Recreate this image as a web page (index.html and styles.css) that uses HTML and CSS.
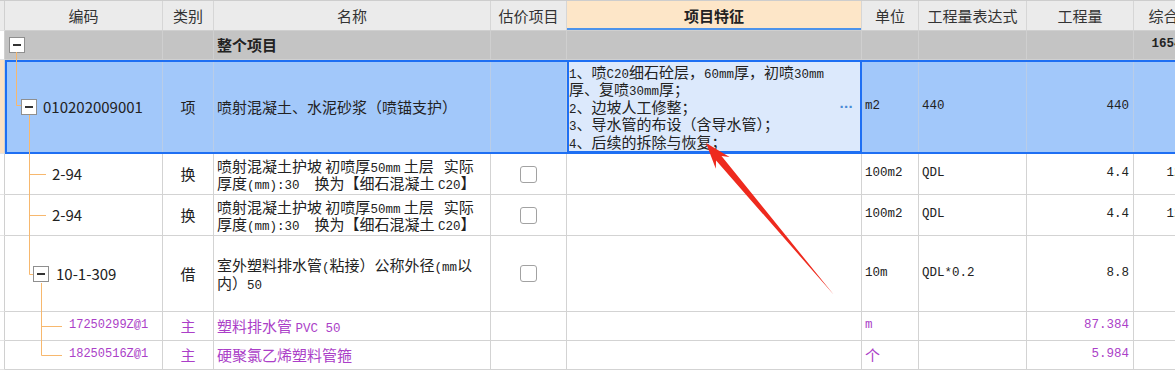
FILE: index.html
```html
<!DOCTYPE html>
<html lang="zh-CN">
<head>
<meta charset="utf-8">
<title>清单</title>
<link rel="stylesheet" href="styles.css">
</head>
<body>
<div class="grid">
  <div class="row head">
    <div class="strip"></div>
    <div class="cells">
      <div class="c ctr">编码</div>
      <div class="c ctr">类别</div>
      <div class="c ctr">名称</div>
      <div class="c ctr">估价项目</div>
      <div class="c ctr feat-h">项目特征</div>
      <div class="c ctr">单位</div>
      <div class="c ctr">工程量表达式</div>
      <div class="c ctr">工程量</div>
      <div class="c ctr">综合单价</div>
    </div>
  </div>

  <div class="row group">
    <div class="strip"></div>
    <div class="cells">
      <div class="c code lv0"><span class="exp"></span></div>
      <div class="c"></div>
      <div class="c name b">整个项目</div>
      <div class="c"></div>
      <div class="c"></div>
      <div class="c"></div>
      <div class="c"></div>
      <div class="c"></div>
      <div class="c rt mono b">165432.18</div>
    </div>
  </div>

  <div class="row sel">
    <div class="strip"></div>
    <div class="cells">
      <div class="c code lv1"><span class="exp"></span><span class="ctext">010202009001</span></div>
      <div class="c ctr">项</div>
      <div class="c name">喷射混凝土、水泥砂浆（喷锚支护）</div>
      <div class="c"></div>
      <div class="c feat">
        <div class="feat-text"><span class="lt">1</span>、喷<span class="lt">C20</span>细石砼层，<span class="lt">60mm</span>厚，初喷<span class="lt">30mm</span><br>厚、复喷<span class="lt">30mm</span>厚；<br><span class="lt">2</span>、边坡人工修整；<br><span class="lt">3</span>、导水管的布设（含导水管）；<br><span class="lt">4</span>、后续的拆除与恢复；</div>
        <span class="dots">···</span>
      </div>
      <div class="c mono pl">m2</div>
      <div class="c mono pl">440</div>
      <div class="c rt mono">440</div>
      <div class="c"></div>
    </div>
  </div>

  <div class="row r2">
    <div class="strip"></div>
    <div class="cells">
      <div class="c code lv2">2-94</div>
      <div class="c ctr">换</div>
      <div class="c name"><div>喷射混凝土护坡 初喷厚<span class="lt">50mm</span> 土层&nbsp;&nbsp;&nbsp;实际<br>厚度<span class="lt">(mm):30&nbsp;&nbsp;</span>换为【细石混凝土 <span class="lt">C20</span>】</div></div>
      <div class="c ctr"><span class="chk"></span></div>
      <div class="c"></div>
      <div class="c mono pl">100m2</div>
      <div class="c mono pl">QDL</div>
      <div class="c rt mono">4.4</div>
      <div class="c rt mono">1297.36</div>
    </div>
  </div>

  <div class="row r2">
    <div class="strip"></div>
    <div class="cells">
      <div class="c code lv2">2-94</div>
      <div class="c ctr">换</div>
      <div class="c name"><div>喷射混凝土护坡 初喷厚<span class="lt">50mm</span> 土层&nbsp;&nbsp;&nbsp;实际<br>厚度<span class="lt">(mm):30&nbsp;&nbsp;</span>换为【细石混凝土 <span class="lt">C20</span>】</div></div>
      <div class="c ctr"><span class="chk"></span></div>
      <div class="c"></div>
      <div class="c mono pl">100m2</div>
      <div class="c mono pl">QDL</div>
      <div class="c rt mono">4.4</div>
      <div class="c rt mono">1297.36</div>
    </div>
  </div>

  <div class="row r3">
    <div class="strip"></div>
    <div class="cells">
      <div class="c code lv3"><span class="exp"></span><span class="ctext2">10-1-309</span></div>
      <div class="c ctr">借</div>
      <div class="c name"><div>室外塑料排水管<span class="lt">(</span>粘接）公称外径<span class="lt">(mm</span>以<br>内）<span class="lt">50</span></div></div>
      <div class="c ctr"><span class="chk"></span></div>
      <div class="c"></div>
      <div class="c mono pl">10m</div>
      <div class="c mono pl">QDL*0.2</div>
      <div class="c rt mono">8.8</div>
      <div class="c"></div>
    </div>
  </div>

  <div class="row rm main">
    <div class="strip"></div>
    <div class="cells">
      <div class="c code lv4 mcode">17250299Z@1</div>
      <div class="c ctr">主</div>
      <div class="c name"><div>塑料排水管 <span class="lt">PVC 50</span></div></div>
      <div class="c"></div>
      <div class="c"></div>
      <div class="c mono pl">m</div>
      <div class="c"></div>
      <div class="c rt mono">87.384</div>
      <div class="c"></div>
    </div>
  </div>

  <div class="row rm main">
    <div class="strip"></div>
    <div class="cells">
      <div class="c code lv4 mcode">18250516Z@1</div>
      <div class="c ctr">主</div>
      <div class="c name">硬聚氯乙烯塑料管箍</div>
      <div class="c"></div>
      <div class="c"></div>
      <div class="c pl">个</div>
      <div class="c"></div>
      <div class="c rt mono">5.984</div>
      <div class="c"></div>
    </div>
  </div>

  <svg class="tree" width="70" height="370" viewBox="0 0 70 370">
    <path d="M16.5 52 V105.5 H21 M29.5 115 V274.5 H33 M29.5 174.5 H46 M29.5 215.5 H46 M41.5 283 V355.5 H62 M41.5 326.5 H62" fill="none" stroke="#f7b86e" stroke-width="1"/>
  </svg>

  <svg class="arrow" width="1175" height="385" viewBox="0 0 1175 385">
    <polygon points="706,143 729.6,157.1 721.5,156.1 834,295 716.1,160.5 715.8,168.7" fill="#ee2a1e"/>
  </svg>
</div>
</body>
</html>
```
FILE: styles.css
```css
html, body {
  margin: 0;
  padding: 0;
  overflow: hidden;
  background: #fff;
}
body {
  font-family: "Noto Sans CJK SC", "Noto Sans", sans-serif;
  font-size: 15px;
  color: #222;
}
.grid {
  position: relative;
  width: 1224px;
}
.row {
  display: flex;
  box-sizing: border-box;
}
.strip {
  width: 5px;
  flex: none;
  box-sizing: border-box;
  border-right: 1px solid #d0d0d0;
  border-bottom: 1px solid #e4e4e4;
}
.cells {
  flex: 1;
  display: grid;
  grid-template-columns: 158px 51px 277px 76px 295px 57px 108px 107px 90px;
  box-sizing: border-box;
  border-bottom: 1px solid #d3d3d3;
}
.c {
  box-sizing: border-box;
  border-right: 1px solid #d3d3d3;
  display: flex;
  align-items: center;
  min-width: 0;
  overflow: hidden;
  white-space: nowrap;
  line-height: 17.5px;
}
.ctr { justify-content: center; }
.rt { justify-content: flex-end; padding-right: 4px; }
.pl { padding-left: 3px; }
.name { padding-left: 3px; }
.b { font-weight: bold; }
.mono {
  font-family: "Liberation Mono", "DejaVu Sans Mono", monospace;
  font-size: 12.5px;
}
.lt {
  font-family: "Liberation Mono", "DejaVu Sans Mono", monospace;
  font-size: 12.5px;
  line-height: 0;
}

/* header */
.head { height: 31px; border-top: 1px solid #cdcdcd; }
.head .strip, .head .cells { background: #ebebeb; }
.head .c { color: #333; border-right-color: #d6d6d6; }
.head .cells { border-bottom-color: #cfcfcf; }
.feat-h {
  background: #fde6c8;
  font-weight: bold;
  color: #222 !important;
  box-shadow: inset 0 -2px 0 #4d93ea;
}

/* group row */
.group { height: 29px; }
.group .cells { background: #c4c4c4; border-bottom-color: #d0d0d0; }
.group .c { border-right-color: #cfcfcf; }

/* selected row */
.sel { height: 94px; }
.sel .strip { background: #fde2c4; }
.sel .cells {
  background: #a2c8fa;
  outline: 2px solid #1e6ff3;
  outline-offset: -2px;
}
.sel .c { border-right-color: #b9cde8; }
.feat {
  position: relative;
  background: #dce9fc;
  outline: 2px solid #1e6ff3;
  outline-offset: -2px;
  padding-left: 2px;
  z-index: 1;
}
.feat-text { flex: 1; }
.dots {
  color: #4a8ad6;
  font-family: "Liberation Sans", sans-serif;
  font-size: 15px;
  font-weight: bold;
  letter-spacing: -0.5px;
  margin-right: 8px;
}

.r2 { height: 41px; }
.r3 { height: 76px; }
.rm { height: 29px; }
.main .c { color: #ab3fc8; }

/* tree */
.code { padding-left: 4px; }
.lv0 { padding-left: 4px; }
.lv1 { padding-left: 16px; }
.lv2 { padding-left: 47px; }
.lv3 { padding-left: 28px; }
.lv4 { padding-left: 64px; }
.ctext { margin-left: 6px; }
.ctext2 { margin-left: 7px; }
.mcode {
  font-family: "Liberation Mono", "DejaVu Sans Mono", monospace;
  font-size: 12px;
}
.exp {
  width: 16px;
  height: 16px;
  flex: none;
  box-sizing: border-box;
  border: 1px solid #8f8f8f;
  background: #fff;
  display: flex;
  align-items: center;
  justify-content: center;
}
.exp::before {
  content: "";
  width: 8px;
  height: 2px;
  background: #333;
}
.chk {
  width: 17px;
  height: 17px;
  box-sizing: border-box;
  border: 1px solid #a2a2a2;
  border-radius: 3px;
  background: #fff;
}
.tree {
  position: absolute;
  left: 0;
  top: 0;
  pointer-events: none;
}
.arrow {
  position: absolute;
  left: 0;
  top: 0;
  pointer-events: none;
  z-index: 2;
}
```
